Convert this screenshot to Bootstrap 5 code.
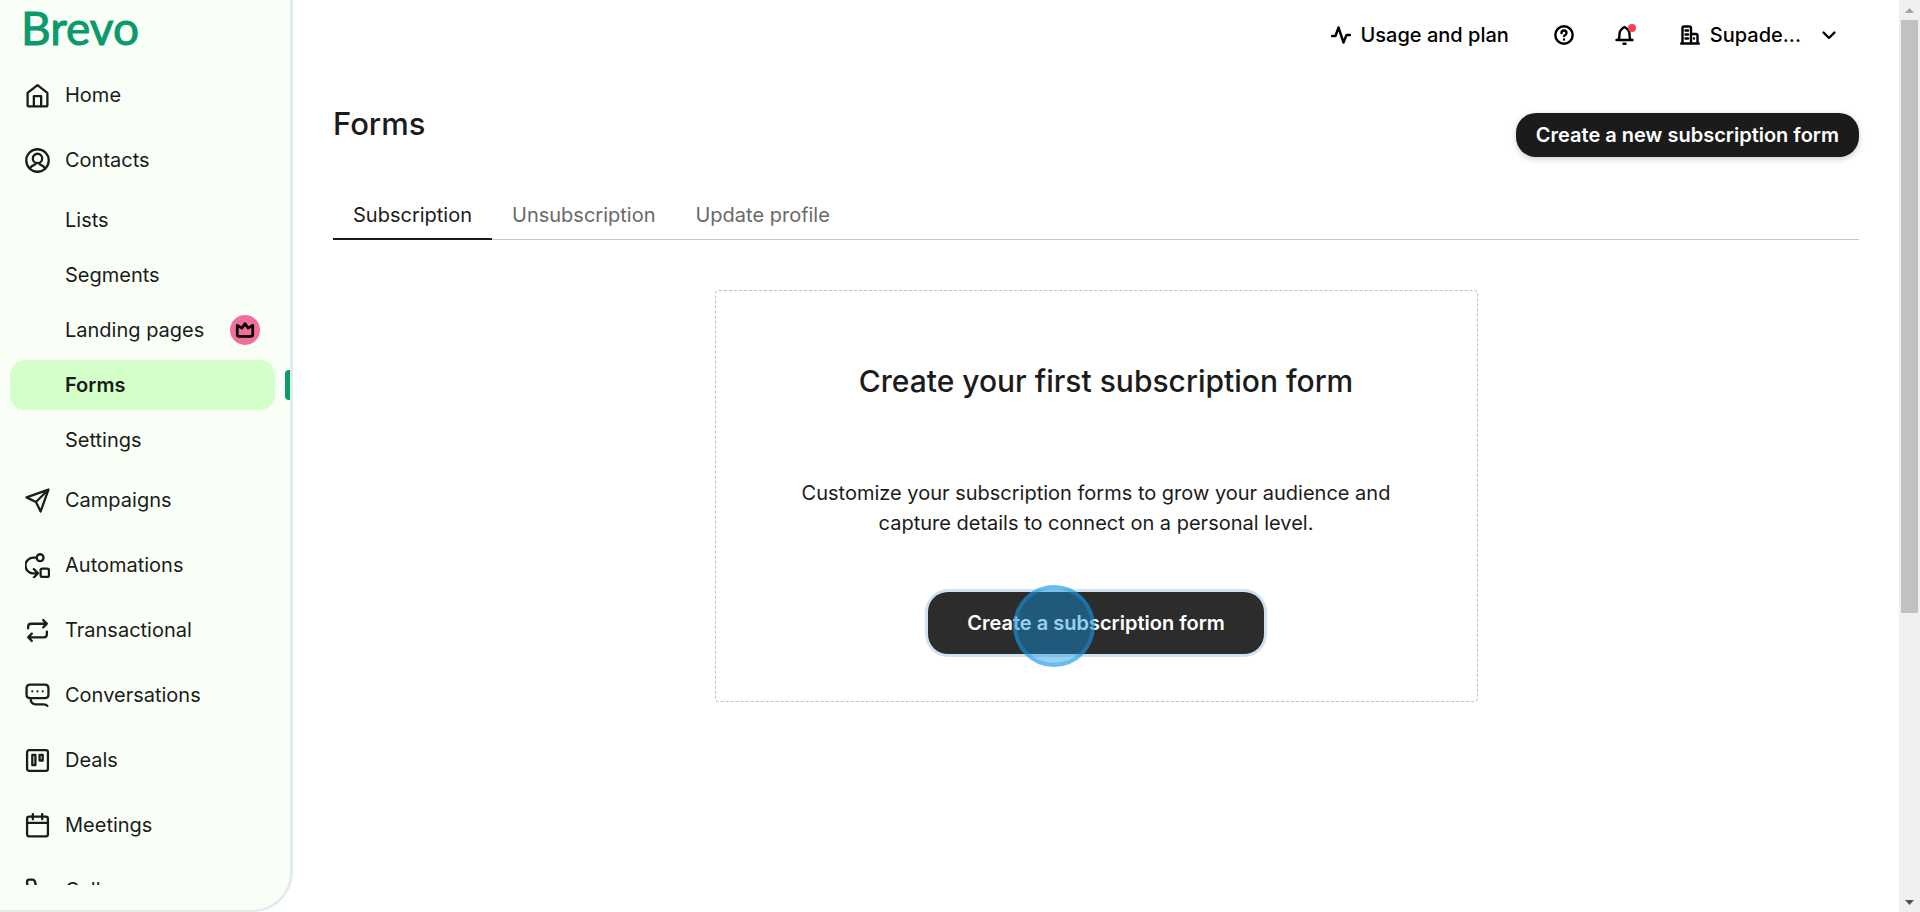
<!DOCTYPE html>
<html lang="en">
<head>
<meta charset="utf-8">
<meta name="viewport" content="width=device-width, initial-scale=1">
<title>Forms - Brevo</title>
<link href="https://cdn.jsdelivr.net/npm/bootstrap@5.3.0/dist/css/bootstrap.min.css" rel="stylesheet">
<style>
body{font-family:Inter,"Liberation Sans",sans-serif;font-size:20px;line-height:30px;color:#1b1b1b;background:#fff}
svg{fill:none;stroke:currentColor;stroke-width:2.2;stroke-linecap:round;stroke-linejoin:round;display:block;flex:none}
.sidebar{width:293px;background:#f9fff6;border-right:3px solid #dfeceb;border-bottom:2px solid #dfeceb;border-bottom-right-radius:40px}
.brand{font-family:Lato,Inter,sans-serif;font-weight:400;font-size:46px;line-height:56px;color:#0b996e;-webkit-text-stroke:1px #0b996e;padding-left:21px;height:70px}
.side-menu{margin-bottom:25px;font-weight:400}
.side-link{height:50px;margin-left:10px;margin-right:15px;margin-bottom:15px;padding-left:15px;gap:15px;border-radius:15px;color:#1b1b1b}
.side-sub{margin-bottom:10px;display:flex;flex-direction:column;gap:5px}
.side-sub .side-link{margin-bottom:0;padding-left:55px;padding-right:15px}
.side-group{margin-top:-5px}
.side-link.active{background:#d5ffc8;font-weight:600}
.active-mark{position:absolute;right:0;top:10px;width:5px;height:30px;background:#0b996e;border-radius:4px 0 0 4px}
.crown{width:30px;height:30px;background:#f36d9d;color:#000}
.crown svg{stroke-width:3}
.topbar{height:70px;padding-right:20px;font-weight:500;color:#000}
.topbar .btn{font:inherit;color:#000;line-height:30px;gap:10px}
.topbar svg{stroke-width:2.4}
.help-btn{margin-left:45px;margin-right:41px}
.bell-btn{margin-right:45px}
.alert-dot{position:absolute;right:-1px;top:-1px;width:8px;height:8px;background:#fa3e54;border-radius:50%}
.page-area{padding:0 40px}
.page-head{padding-top:35px}
.page-title{font-size:31px;line-height:38px;font-weight:500}
.btn-ink{background:#1b1b1b;color:#fff;font-size:20px;font-weight:600;border:0}
.btn-ink:hover{background:#2c2c2c;color:#fff}
.btn-new{height:44px;line-height:30px;padding:7px 20px;border-radius:20px;box-shadow:0 2px 6px #0003}
.tabs{border-bottom:1px solid #c9c9c9;margin-top:33px;font-weight:400}
.tabs .nav-link{border:0;border-bottom:2px solid transparent;border-radius:0;margin-bottom:-1px;padding:10px 20px 8px;color:#696969;height:50px}
.tabs .nav-link.active{color:#1b1b1b;border-color:#1b1b1b}
.empty-card{margin-top:50px;height:412px;border:1px dashed #c0c0c0;border-radius:4px;padding:70px 60px 0}
.empty-card h2{font-size:30px;line-height:40px;font-weight:500;padding-left:20px;margin-bottom:77px}
.empty-card p{font-weight:400;margin-bottom:54px}
.btn-first{background:#2c2c2c;height:62px;padding:0 39px;border-radius:20px;box-shadow:0 0 0 3px #cfe2f3}
.click-spot{position:absolute;left:85px;top:-7px;width:82px;height:82px;border-radius:50%;background:#1594e070;border:4px solid #1a9be860;pointer-events:none}
.scroll-rail{width:21px;background:#f0f0f0;padding:0 2px}
.scroll-thumb{height:65%;background:#c1c1c1}
.arrow-box{height:20px}
</style>
</head>
<body>
<div class="d-flex vh-100 overflow-hidden">
<aside class="sidebar d-flex flex-column flex-shrink-0">
  <a href="#" class="brand text-decoration-none flex-shrink-0">Brevo</a>
  <nav class="side-menu flex-grow-1 overflow-hidden" aria-label="Main">
    <a href="#" class="side-link d-flex align-items-center text-decoration-none"><svg width="25" height="25" viewBox="0 0 24 24"><path d="M2.500 9.500 12 2l9.500 7.500V21a1.500 1.500 0 0 1-1.500 1.500H4A1.500 1.500 0 0 1 2.500 21zM8.500 22V12.500h7V22"/></svg>Home</a>
    <a href="#" class="side-link d-flex align-items-center text-decoration-none"><svg width="25" height="25" viewBox="0 0 24 24"><circle cx="12" cy="12" r="10.800"/><circle cx="12" cy="10" r="4.500"/><path d="M4.500 19.500c1.500-2 3-3 5-3.500l1-1.500M19.500 19.500c-1.500-2-3-3-5-3.500l-1-1.500"/></svg>Contacts</a>
    <div class="side-group">
      <div class="side-sub">
        <a href="#" class="side-link d-flex align-items-center text-decoration-none">Lists</a>
        <a href="#" class="side-link d-flex align-items-center text-decoration-none">Segments</a>
        <a href="#" class="side-link d-flex align-items-center justify-content-between text-decoration-none">Landing pages<span class="crown rounded-circle d-flex align-items-center justify-content-center"><svg width="20" height="20" viewBox="0 0 22 22"><path d="M2.500 6v10q0 2 2 2h13q2 0 2-2V6l-5 3-3.500-5L7.500 9z"/></svg></span></a>
        <div class="position-relative"><a href="#" class="side-link active d-flex align-items-center text-decoration-none" aria-current="page">Forms</a><span class="active-mark"></span></div>
        <a href="#" class="side-link d-flex align-items-center text-decoration-none">Settings</a>
      </div>
    </div>
    <a href="#" class="side-link d-flex align-items-center text-decoration-none"><svg width="25" height="25" viewBox="0 0 24 24"><path d="M22.500 1.500 1.500 9l9 4.500L15 22.500zM22.500 1.500l-12 12"/></svg>Campaigns</a>
    <a href="#" class="side-link d-flex align-items-center text-decoration-none"><svg width="25" height="25" viewBox="0 0 24 24"><circle cx="14.500" cy="4.500" r="3.300"/><path d="M11 4.500H8.500a7.500 7.500 0 0 0-1 15H12M8.500 15.500l4 4-4 4"/><rect x="15" y="15" width="8" height="8" rx="1.500"/></svg>Automations</a>
    <a href="#" class="side-link d-flex align-items-center text-decoration-none"><svg width="25" height="25" viewBox="0 0 24 24"><path d="M3 10V8.500Q3 5.500 6 5.500h15M17.500 2l3.500 3.500L17.500 9M21 13v2.500q0 3-3 3H3M6.500 15 3 18.500 6.500 22"/></svg>Transactional</a>
    <a href="#" class="side-link d-flex align-items-center text-decoration-none"><svg width="25" height="25" viewBox="0 0 24 24"><path d="M5 1.500h14q3.500 0 3.500 3.500v6q0 3.500-3.500 3.500H5Q1.500 14.500 1.500 11V5q0-3.500 3.500-3.500zM5.500 14.500Q5 20 10 20.500h7.500q3 0 4 1.500"/><path d="M7 8h.01M12 8h.01M17 8h.01"/></svg>Conversations</a>
    <a href="#" class="side-link d-flex align-items-center text-decoration-none"><svg width="25" height="25" viewBox="0 0 24 24"><rect x="2" y="2" width="20" height="20" rx="2"/><path d="M7 6.500h3v10H7zM14 6.500h3v5.500h-3z"/></svg>Deals</a>
    <a href="#" class="side-link d-flex align-items-center text-decoration-none"><svg width="25" height="25" viewBox="0 0 24 24"><rect x="2" y="3.500" width="20" height="19" rx="2"/><path d="M2 9.500h20M7.500 1v5M16.500 1v5"/></svg>Meetings</a>
    <a href="#" class="side-link d-flex align-items-center text-decoration-none"><svg width="25" height="25" viewBox="0 0 24 24"><path d="M2 3.500Q2 1.500 4 1.500h3q2 0 2.500 2l1 4q0 1-1 2L8 11q2 4 6 6l1.500-1.500q1-1 2-1l4 1q1.500.5 1.500 2V20q0 2-2 2C10 22 2 13 2 3.500z"/></svg>Calls</a>
  </nav>
</aside>

<div class="flex-grow-1 page-area">
  <header class="topbar d-flex align-items-center justify-content-end">
    <button type="button" class="btn border-0 p-0 d-flex align-items-center"><svg width="20" height="20" viewBox="0 0 20 20"><path d="M1 11h3.500L7.500 2.500l5 15 3-7.500H19"/></svg>Usage and plan</button>
    <button type="button" class="btn help-btn border-0 p-0" aria-label="Help"><svg width="20" height="20" viewBox="0 0 20 20"><circle cx="10" cy="10" r="8.700"/><path d="M7.500 8q0-2.500 2.500-2.500T12.500 8q0 1.500-2.500 3M10 14.500h.01"/></svg></button>
    <button type="button" class="btn bell-btn border-0 p-0 position-relative" aria-label="Notifications"><svg width="20" height="20" viewBox="0 0 20 20"><path d="M1.500 15h16M3.500 15q1-2 1-6t5-7q5 3 5 7t1 6M8.500 18.700h2"/></svg><span class="alert-dot"></span></button>
    <button type="button" class="btn border-0 p-0 d-flex align-items-center"><svg width="20" height="20" viewBox="0 0 20 20"><path d="M1.200 18.500h17.600M2.500 18V3q0-1.500 1.500-1.500h5.500Q11 1.500 11 3v15M11 9h5q1.500 0 1.500 1.500V18M5.500 5.500h2.500M5.500 9.500h2.500M5.500 13.500h2.500M14 13.500h.01"/></svg><span>Supade...</span><svg class="ms-2" width="20" height="20" viewBox="0 0 20 20"><path d="m4.500 7.500 5.500 5.500 5.500-5.500"/></svg></button>
  </header>
  <main>
    <div class="page-head d-flex justify-content-between">
      <h1 class="page-title mb-0">Forms</h1>
      <button type="button" class="btn btn-ink btn-new mt-2">Create a new subscription form</button>
    </div>
    <ul class="nav tabs">
      <li class="nav-item"><a class="nav-link active" aria-current="page" href="#">Subscription</a></li>
      <li class="nav-item"><a class="nav-link" href="#">Unsubscription</a></li>
      <li class="nav-item"><a class="nav-link" href="#">Update profile</a></li>
    </ul>
    <section class="empty-card w-50 mx-auto text-center">
      <h2>Create your first subscription form</h2>
      <p>Customize your subscription forms to grow your audience and capture details to connect on a personal level.</p>
      <div class="position-relative d-inline-block">
        <button type="button" class="btn btn-ink btn-first">Create a subscription form</button>
        <span class="click-spot"></span>
      </div>
    </section>
  </main>
</div>

<div class="scroll-rail d-flex flex-column flex-shrink-0" aria-hidden="true">
  <div class="arrow-box d-flex align-items-center justify-content-center"><svg width="9" height="5" viewBox="0 0 9 5"><path d="M0 5 4.500 0 9 5z" fill="#a3a3a3" stroke="none"/></svg></div>
  <div class="scroll-thumb"></div>
  <div class="arrow-box d-flex align-items-center justify-content-center mt-auto"><svg width="9" height="5" viewBox="0 0 9 5"><path d="M0 0h9L4.500 5z" fill="#505050" stroke="none"/></svg></div>
</div>
</div>
<script src="https://cdn.jsdelivr.net/npm/bootstrap@5.3.0/dist/js/bootstrap.bundle.min.js"></script>
</body>
</html>
